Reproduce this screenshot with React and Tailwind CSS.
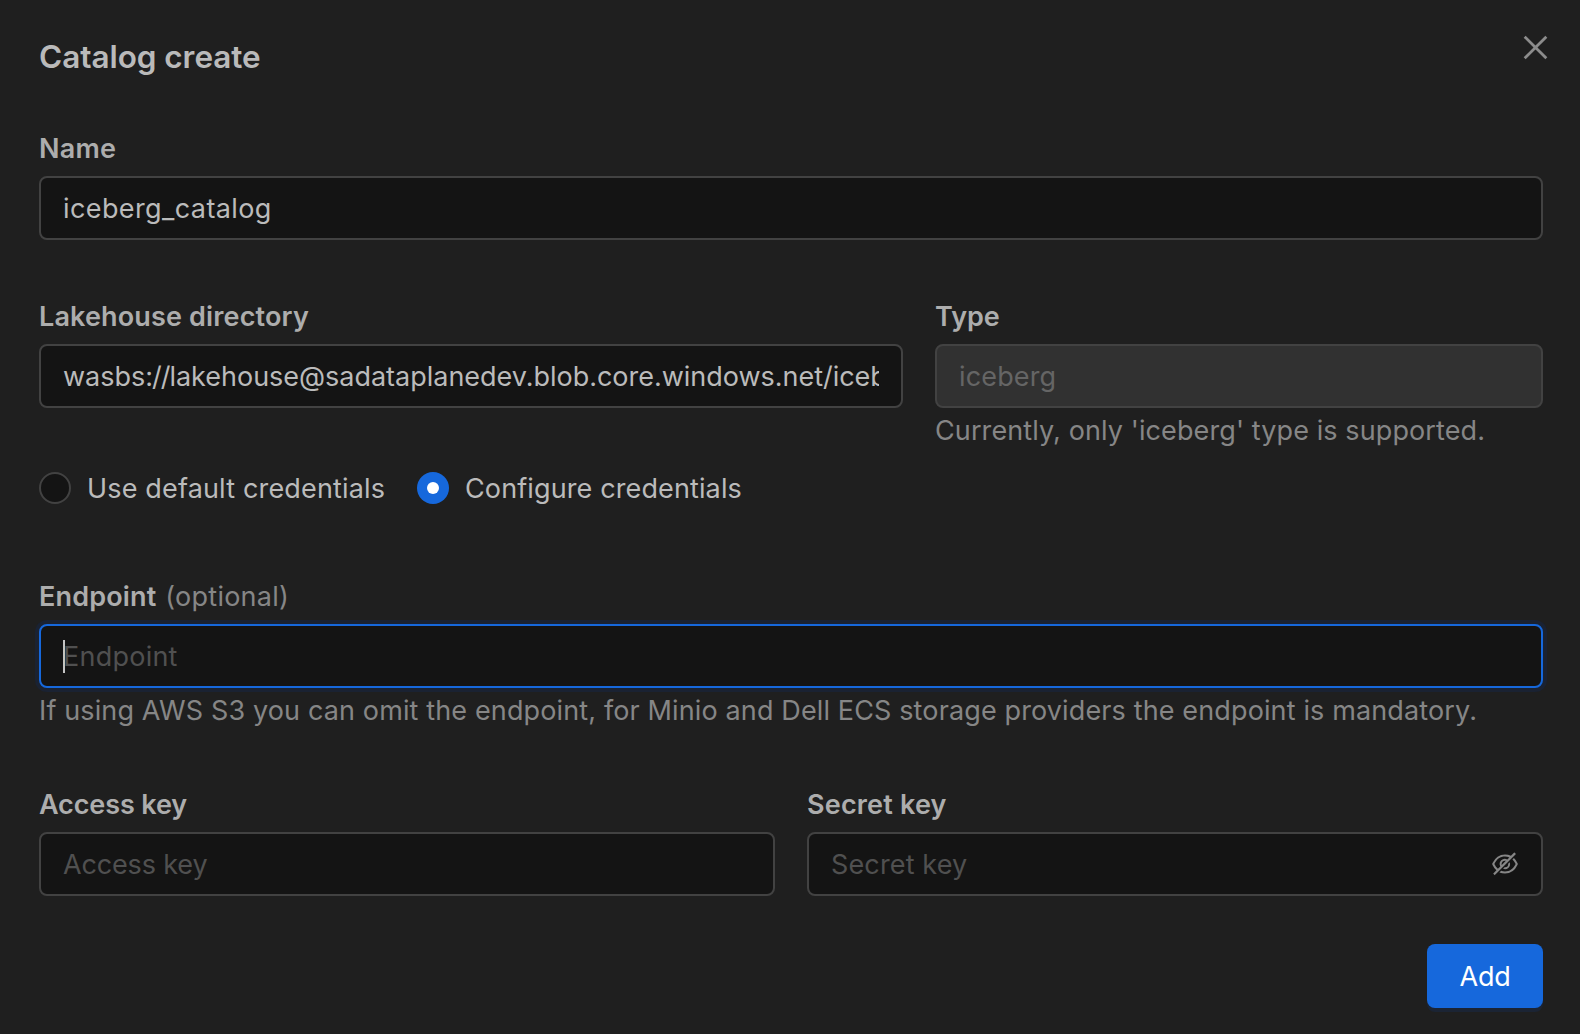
import React from "react";
import { AiOutlineClose, AiOutlineEyeInvisible } from "react-icons/ai";

const fieldBox =
  "flex h-16 items-center rounded-lg border-2 border-[#424242] bg-[#141414] px-[22px]";

function Label({ children }) {
  return (
    <div className="mb-1.5 flex h-11 items-center pt-0.5 font-semibold leading-[42px] text-[#adadad]">
      {children}
    </div>
  );
}

function Help({ children }) {
  return <div className="h-11 whitespace-nowrap leading-[46px] text-[#868686]">{children}</div>;
}

export default function App() {
  return (
    <div className="flex h-[1034px] w-[1580px] flex-col bg-[#1f1f1f] pl-[39px] pr-[37px] font-['Inter',sans-serif] text-[27px] text-[#bbbbbb]">
      <header className="flex h-[126px] items-start justify-between">
        <h1 className="mt-[33px] text-[31.5px] font-semibold leading-[48px] tracking-[-0.05px] text-[#bababa]">
          Catalog create
        </h1>
        <button className="-mr-[9.5px] mt-[30px]" aria-label="Close">
          <AiOutlineClose className="size-[35px] text-[#8c8c8c]" />
        </button>
      </header>

      <div>
        <Label>
          <span className="tracking-[0.2px]">Name</span>
        </Label>
        <div className={fieldBox}>
          <span className="pt-0.5 tracking-[0.4px]">iceberg_catalog</span>
        </div>
      </div>

      <div className="mt-[54px] grid grid-cols-[864px_608px] gap-8">
        <div>
          <Label>
            <span className="tracking-[0.15px]">Lakehouse directory</span>
          </Label>
          <div className={fieldBox}>
            <div className="h-11 w-full overflow-hidden whitespace-nowrap leading-[46px] tracking-[-0.02px]">
              wasbs<span className="tracking-[-1px]">://</span>lakehouse@sadataplanedev.blob.core.windows.net/iceberg
            </div>
          </div>
        </div>
        <div>
          <Label>
            <span>Type</span>
          </Label>
          <div className="flex h-16 items-center rounded-lg border-2 border-[#424242] bg-[#313131] px-[22px] text-[#656565]">
            <span className="pt-0.5 tracking-[0.14px]">iceberg</span>
          </div>
          <Help>
            <span className="tracking-[0.1px]">Currently, only 'iceberg' type is supported.</span>
          </Help>
        </div>
      </div>

      <div className="mt-[14px] flex h-11 items-center">
        <span className="size-8 rounded-full border-2 border-[#424242] bg-[#141414]" />
        <span className="ml-4 w-[330px] pt-0.5 tracking-[0.16px]">Use default credentials</span>
        <span className="flex size-8 items-center justify-center rounded-full bg-[#1668dc]">
          <span className="size-3 rounded-full bg-white" />
        </span>
        <span className="ml-4 pt-0.5 tracking-[0.12px]">Configure credentials</span>
      </div>

      <div className="mt-16">
        <Label>
          <span className="tracking-[0.15px]">Endpoint</span>
          <span className="ml-[9px] font-normal tracking-[0.24px] text-[#868686]">(optional)</span>
        </Label>
        <div className="flex h-16 items-center rounded-lg border-2 border-[#1668dc] bg-[#141414] px-[22px] text-[#505050] shadow-[0_0_0_4px_#1a2232]">
          <span className="h-[33px] w-0.5 bg-[#c4c4c4]" />
          <span className="-ml-0.5 pt-0.5 tracking-[0.24px]">Endpoint</span>
        </div>
        <Help>
          <span className="tracking-[0.13px]">
            If using AWS S3 you can omit the endpoint, for Minio and Dell ECS storage providers the
            endpoint is mandatory.
          </span>
        </Help>
      </div>

      <div className="mt-[50px] grid grid-cols-[736px_736px] gap-8">
        <div>
          <Label>
            <span className="tracking-[-0.12px]">Access key</span>
          </Label>
          <div className={fieldBox}>
            <span className="pt-0.5 tracking-[-0.15px] text-[#505050]">Access key</span>
          </div>
        </div>
        <div>
          <Label>
            <span className="tracking-[0.18px]">Secret key</span>
          </Label>
          <div className={fieldBox}>
            <span className="flex-1 pt-0.5 tracking-[0.14px] text-[#505050]">Secret key</span>
            <AiOutlineEyeInvisible className="-mr-px size-[30px] text-[#868686]" />
          </div>
        </div>
      </div>

      <button className="mt-12 flex h-16 w-[116px] shrink-0 items-center justify-center self-end rounded-lg bg-[#1668dc] pt-0.5 tracking-[-0.3px] text-white shadow-[0_4px_0_#1b2434]">
        Add
      </button>
    </div>
  );
}
